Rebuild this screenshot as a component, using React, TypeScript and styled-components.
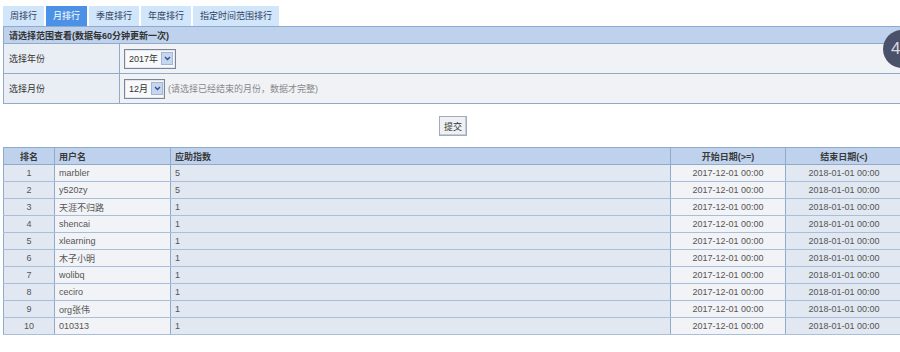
import React from "react";
import styled, { createGlobalStyle } from "styled-components";

const Global = createGlobalStyle`
  html, body { margin: 0; padding: 0; background: #fff; overflow: hidden; }
  body { font-family: "Liberation Sans", "Noto Sans CJK SC", sans-serif; font-size: 9px; color: #444; }
`;

const Page = styled.div`
  position: relative;
  width: 900px;
  height: 352px;
  overflow: hidden;
  padding: 6px 0 0 3px;
  box-sizing: border-box;
`;

const Tabs = styled.div`
  display: flex;
  gap: 2px;
  height: 20px;
`;

const Tab = styled.div<{ $active?: boolean }>`
  height: 20px;
  line-height: 20px;
  padding: 0 7px;
  background: ${(p) => (p.$active ? "#4b92e6" : "#d2e6fb")};
  color: ${(p) => (p.$active ? "#fff" : "#2f3f5f")};
  font-size: 9px;
`;

const FormTable = styled.table`
  width: 900px;
  border-collapse: collapse;
  table-layout: fixed;
`;

const FormHead = styled.th`
  height: 16px;
  padding: 0 0 0 5px;
  text-align: left;
  font-weight: bold;
  color: #333;
  background: #bed2ee;
  border-top: 1px solid #8fabc9;
  border-bottom: 1px solid #8fabc9;
  border-left: 1px solid #8fabc9;
`;

const Label = styled.td`
  height: 29px;
  padding: 0 0 0 5px;
  background: #e9edf4;
  color: #333;
  border-bottom: 1px solid #8fabc9;
  border-left: 1px solid #8fabc9;
  border-right: 1px solid #8fabc9;
`;

const Field = styled.td`
  height: 29px;
  padding: 0 0 0 4px;
  background: #f1f2f6;
  border-bottom: 1px solid #8fabc9;
`;

const FieldRow = styled.div`
  display: flex;
  align-items: center;
  gap: 3px;
`;

const FakeSelect = styled.div<{ $w: number }>`
  display: inline-flex;
  align-items: center;
  gap: 3px;
  box-sizing: border-box;
  width: ${(p) => p.$w}px;
  height: 20px;
  padding: 0 2px 0 4px;
  border: 1px solid #7a8598;
  box-shadow: inset 0 0 0 1px #e3e6ec;
  background: #f8f9fb;
  color: #333;
  font-size: 9px;
  white-space: nowrap;
`;

const Arrow = styled.span`
  flex: none;
  margin-left: auto;
  display: inline-flex;
  align-items: center;
  justify-content: center;
  width: 10px;
  height: 11px;
  background: #c7d6ef;
  border: 1px solid #a3b6d6;
`;

const Hint = styled.span`
  color: #888;
  font-size: 9px;
  white-space: nowrap;
`;

const ButtonRow = styled.div`
  width: 900px;
  display: flex;
  justify-content: center;
  padding: 12px 0 11px;
`;

const Submit = styled.button`
  width: 28px;
  height: 20px;
  padding: 0;
  font-family: inherit;
  font-size: 9px;
  color: #333;
  background: #eef0f4;
  border: 1px solid #a0abbb;
  box-shadow: inset -1px -1px 0 #c5ccd6;
`;

const DataTable = styled.table`
  width: 900px;
  border-collapse: collapse;
  table-layout: fixed;
`;

type Align = "left" | "center";

const Th = styled.th<{ $align: Align }>`
  height: 16px;
  padding: 0;
  padding-left: ${(p) => (p.$align === "left" ? "4px" : "0")};
  text-align: ${(p) => p.$align};
  font-weight: bold;
  color: #3a3a3a;
  background: #bed2ee;
  border: 1px solid #8fabc9;
`;

const Td = styled.td<{ $align: Align; $light?: boolean }>`
  height: 16px;
  padding: 0;
  padding-left: ${(p) => (p.$align === "left" ? "4px" : "0")};
  text-align: ${(p) => p.$align};
  color: #555;
  background: ${(p) => (p.$light ? "#f2f3f7" : "#e1e8f1")};
  border-top: 1px solid #a9bfd9;
  border-bottom: 1px solid #a9bfd9;
  border-left: 1px solid #8fabc9;
  border-right: 1px solid #8fabc9;
  white-space: nowrap;
  overflow: hidden;
`;

const Badge = styled.div`
  position: absolute;
  left: 883px;
  top: 30px;
  width: 38px;
  height: 38px;
  border-radius: 50%;
  background: #4b5169;
  color: #d8dae0;
  font-family: "Liberation Sans", sans-serif;
  font-size: 17px;
  line-height: 38px;
  padding-left: 8px;
  box-sizing: border-box;
`;

const tabs = ["周排行", "月排行", "季度排行", "年度排行", "指定时间范围排行"];

const rows: [string, string][] = [
  ["marbler", "5"],
  ["y520zy", "5"],
  ["天涯不归路", "1"],
  ["shencai", "1"],
  ["xlearning", "1"],
  ["木子小明", "1"],
  ["wolibq", "1"],
  ["ceciro", "1"],
  ["org张伟", "1"],
  ["010313", "1"],
];

const Chevron = () => (
  <svg width="7" height="5" viewBox="0 0 7 5">
    <path d="M1 1 L3.5 3.5 L6 1" fill="none" stroke="#2f4f8f" strokeWidth="1.4" />
  </svg>
);

export default function App() {
  return (
    <Page>
      <Global />
      <Tabs>
        {tabs.map((t, i) => (
          <Tab key={t} $active={i === 1}>
            {t}
          </Tab>
        ))}
      </Tabs>
      <FormTable>
        <colgroup>
          <col style={{ width: 116 }} />
          <col />
        </colgroup>
        <thead>
          <tr>
            <FormHead colSpan={2}>请选择范围查看(数据每60分钟更新一次)</FormHead>
          </tr>
        </thead>
        <tbody>
          <tr>
            <Label>选择年份</Label>
            <Field>
              <FieldRow>
                <FakeSelect $w={52}>
                  2017年
                  <Arrow>
                    <Chevron />
                  </Arrow>
                </FakeSelect>
              </FieldRow>
            </Field>
          </tr>
          <tr>
            <Label>选择月份</Label>
            <Field>
              <FieldRow>
                <FakeSelect $w={41}>
                  12月
                  <Arrow>
                    <Chevron />
                  </Arrow>
                </FakeSelect>
                <Hint>(请选择已经结束的月份，数据才完整)</Hint>
              </FieldRow>
            </Field>
          </tr>
        </tbody>
      </FormTable>
      <ButtonRow>
        <Submit>提交</Submit>
      </ButtonRow>
      <DataTable>
        <colgroup>
          <col style={{ width: 51 }} />
          <col style={{ width: 116 }} />
          <col style={{ width: 500 }} />
          <col style={{ width: 115 }} />
          <col />
        </colgroup>
        <thead>
          <tr>
            <Th $align="center">排名</Th>
            <Th $align="left">用户名</Th>
            <Th $align="left">应助指数</Th>
            <Th $align="center">开始日期(&gt;=)</Th>
            <Th $align="center">结束日期(&lt;)</Th>
          </tr>
        </thead>
        <tbody>
          {rows.map(([name, score], i) => (
            <tr key={name}>
              <Td $align="center">{i + 1}</Td>
              <Td $align="left" $light>
                {name}
              </Td>
              <Td $align="left">{score}</Td>
              <Td $align="center" $light>
                2017-12-01 00:00
              </Td>
              <Td $align="center">2018-01-01 00:00</Td>
            </tr>
          ))}
        </tbody>
      </DataTable>
      <Badge>4</Badge>
    </Page>
  );
}
